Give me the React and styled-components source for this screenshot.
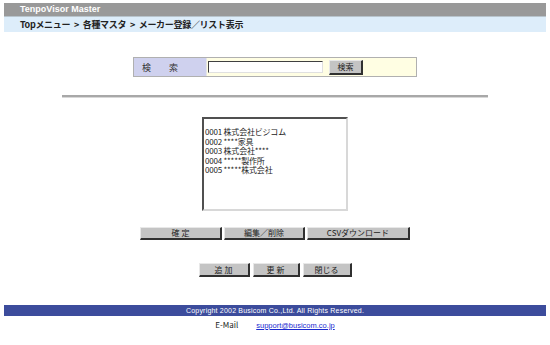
import React from "react";
import styled, { createGlobalStyle } from "styled-components";

const GlobalStyle = createGlobalStyle`
  html, body {
    margin: 0;
    padding: 0;
    background: #ffffff;
  }
  body {
    font-family: "Noto Sans CJK JP", "Noto Sans", sans-serif;
    color: #222222;
  }
`;

const items = [
  "0001 株式会社ビジコム",
  "0002 ****家具",
  "0003 株式会社****",
  "0004 *****製作所",
  "0005 *****株式会社",
];

export default function App() {
  return (
    <>
      <GlobalStyle />
      <Page>
        <Header>
          <TitleBar>TenpoVisor Master</TitleBar>
          <Crumbs>Topメニュー &gt; 各種マスタ &gt; メーカー登録／リスト表示</Crumbs>
        </Header>

        <SearchBox>
          <SearchLabel>
            <span>検</span>
            <span>索</span>
          </SearchLabel>
          <SearchCell>
            <SearchInput type="text" />
            <Button $w={34} $h={15}>検索</Button>
          </SearchCell>
        </SearchBox>

        <Rule />

        <ListBox>
          {items.map((t) => (
            <ListItem key={t}>{t}</ListItem>
          ))}
        </ListBox>

        <ButtonRow $top={16} $gap={2}>
          <Button $w={82} $h={13}>確 定</Button>
          <Button $w={81} $h={13}>編集／削除</Button>
          <Button $w={103} $h={13}>CSVダウンロード</Button>
        </ButtonRow>

        <ButtonRow $top={23} $gap={3}>
          <Button $w={51} $h={14}>追 加</Button>
          <Button $w={47} $h={14}>更 新</Button>
          <Button $w={49} $h={14}>閉じる</Button>
        </ButtonRow>

        <Footer>
          <CopyBar>Copyright 2002 Busicom Co.,Ltd. All Rights Reserved.</CopyBar>
          <MailLine>
            <span>E-Mail</span>
            <MailLink href="#">support@busicom.co.jp</MailLink>
          </MailLine>
        </Footer>
      </Page>
    </>
  );
}

const Page = styled.div`
  width: 550px;
  height: 345px;
  padding: 3px 4px 0;
  box-sizing: border-box;
  display: flex;
  flex-direction: column;
  align-items: center;
`;

const Header = styled.div`
  width: 542px;
  display: flex;
  flex-direction: column;
`;

const TitleBar = styled.div`
  height: 14px;
  background: #999999;
  border-bottom: 1px solid #b8c4cc;
  box-sizing: border-box;
  color: #ffffff;
  font-family: "Liberation Sans", "Noto Sans CJK JP", sans-serif;
  font-weight: bold;
  font-size: 9px;
  line-height: 13px;
  padding-left: 16px;
`;

const Crumbs = styled.div`
  height: 15px;
  background: #ddedfa;
  color: #222222;
  font-weight: bold;
  font-size: 9px;
  line-height: 15px;
  padding-left: 16px;
  letter-spacing: -0.3px;
  word-spacing: 2px;
`;

const SearchBox = styled.div`
  margin-top: 25px;
  width: 284px;
  height: 20px;
  box-sizing: border-box;
  border: 1px solid #b0b0b0;
  display: flex;
`;

const SearchLabel = styled.div`
  width: 73px;
  box-sizing: border-box;
  background: #cfd1ee;
  display: flex;
  align-items: center;
  gap: 18px;
  padding-left: 8px;
  font-size: 9px;
  color: #333333;
  border-right: 1px solid #e6e6e6;
`;

const SearchCell = styled.div`
  flex: 1;
  background: #fffee3;
  display: flex;
  align-items: center;
  padding-left: 1px;
  gap: 6px;
`;

const SearchInput = styled.input`
  width: 115px;
  height: 12px;
  box-sizing: border-box;
  margin: 0;
  padding: 0;
  background: #ffffff;
  border-style: solid;
  border-width: 1px;
  border-color: #404040 #e0e0e0 #e0e0e0 #404040;
`;

const Button = styled.button`
  width: ${(p) => p.$w}px;
  height: ${(p) => p.$h}px;
  box-sizing: border-box;
  margin: 0;
  padding: 0;
  background: #c4c4c4;
  border-style: solid;
  border-width: 1px 2px 2px 1px;
  border-color: #e8e8e8 #303030 #303030 #e8e8e8;
  font-family: "Noto Sans CJK JP", sans-serif;
  font-size: 8px;
  line-height: 1;
  color: #222222;
  display: flex;
  align-items: center;
  justify-content: center;
`;

const Rule = styled.div`
  margin-top: 18px;
  width: 426px;
  height: 2px;
  background: #a8a8a8;
  border-bottom: 1px solid #d8d8d8;
`;

const ListBox = styled.div`
  margin-top: 19px;
  width: 146px;
  height: 94px;
  box-sizing: border-box;
  padding: 8px 0 0 1px;
  background: #ffffff;
  border-style: solid;
  border-width: 2px;
  border-color: #505050 #d8d8d8 #d8d8d8 #505050;
  display: flex;
  flex-direction: column;
`;

const ListItem = styled.div`
  font-size: 8px;
  line-height: 9.5px;
  height: 9.5px;
  color: #222222;
  white-space: nowrap;
  letter-spacing: -0.2px;
`;

const ButtonRow = styled.div`
  margin-top: ${(p) => p.$top}px;
  display: flex;
  gap: ${(p) => p.$gap}px;
`;

const Footer = styled.div`
  margin-top: 28px;
  width: 542px;
  display: flex;
  flex-direction: column;
  align-items: center;
`;

const CopyBar = styled.div`
  width: 100%;
  height: 11px;
  background: #3c4c9c;
  color: #ffffff;
  font-family: "Liberation Sans", sans-serif;
  font-size: 7px;
  letter-spacing: 0.2px;
  line-height: 11px;
  text-align: center;
`;

const MailLine = styled.div`
  margin-top: 2px;
  display: flex;
  align-items: baseline;
  gap: 18px;
  font-size: 8px;
  line-height: 13px;
  color: #222222;
`;

const MailLink = styled.a`
  color: #1a2ad0;
  text-decoration: underline;
  font-family: "Liberation Sans", sans-serif;
  font-size: 7.5px;
`;
